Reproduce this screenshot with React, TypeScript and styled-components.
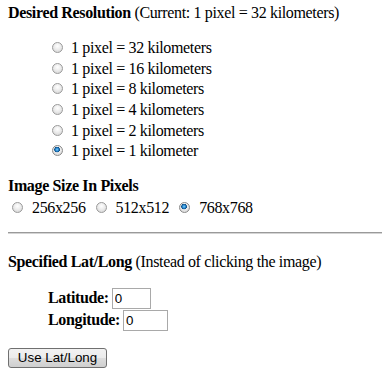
import React from 'react';
import styled, { createGlobalStyle } from 'styled-components';

const GlobalStyle = createGlobalStyle`
    html, body {
        margin: 0;
        padding: 0;
        background: #ffffff;
    }
    body {
        font-family: 'Liberation Serif', 'Times New Roman', serif;
        font-size: 16px;
        letter-spacing: -0.35px;
        color: #000000;
    }
`;

const resolutions = ['32 kilometers', '16 kilometers', '8 kilometers', '4 kilometers', '2 kilometers', '1 kilometer'];
const sizes = ['256x256', '512x512', '768x768'];

export default function App() {
    return (
        <Page>
            <GlobalStyle />
            <Heading>
                <strong>Desired Resolution</strong> (Current: 1 pixel = 32 kilometers)
            </Heading>
            <Indented>
                {resolutions.map((label, i) => (
                    <ListRow key={label}>
                        <Radio type="radio" name="resolution" defaultChecked={i === resolutions.length - 1} />
                        1 pixel = {label}
                    </ListRow>
                ))}
            </Indented>

            <Heading $top={15}>
                <strong>Image Size In Pixels</strong>
            </Heading>
            <SizeRow>
                {sizes.map((size, i) => (
                    <SizeOption key={size}>
                        <Radio type="radio" name="size" defaultChecked={i === sizes.length - 1} $gap={9} />
                        {size}
                    </SizeOption>
                ))}
            </SizeRow>

            <Rule />

            <Heading $top={19}>
                <strong>Specified Lat/Long</strong> (Instead of clicking the image)
            </Heading>
            <CoordBlock>
                <CoordRow>
                    <CoordLabel>Latitude:</CoordLabel>
                    <TextBox defaultValue="0" $width={39} />
                </CoordRow>
                <CoordRow>
                    <CoordLabel>Longitude:</CoordLabel>
                    <TextBox defaultValue="0" $width={45} />
                </CoordRow>
            </CoordBlock>
            <Button type="button">Use Lat/Long</Button>
        </Page>
    );
}

const Page = styled.div`
    padding: 4px 0 10px 8px;
    display: flex;
    flex-direction: column;
    align-items: flex-start;
`;

const Heading = styled.div<{ $top?: number }>`
    line-height: 18px;
    margin-top: ${({ $top }) => $top ?? 0}px;
    white-space: nowrap;
`;

const Indented = styled.div`
    margin: 16px 0 0 40px;
    display: flex;
    flex-direction: column;
`;

const ListRow = styled.label`
    display: flex;
    align-items: center;
    height: 20.7px;
    line-height: 20.7px;
    white-space: pre;
`;

const Radio = styled.input<{ $gap?: number }>`
    appearance: none;
    -webkit-appearance: none;
    box-sizing: border-box;
    width: 11px;
    height: 11px;
    margin: -2px ${({ $gap }) => $gap ?? 8}px 0 4px;
    border-radius: 50%;
    border: 1px solid #9a9a9a;
    background: radial-gradient(circle at 50% 35%, #ffffff 0%, #ececec 45%, #cfcfcf 100%);
    flex: none;

    &:checked {
        border-color: #8a8a8a;
        background:
            radial-gradient(circle at 45% 40%, #7fd0ff 0px, #2a8ad0 1.5px, #0d4d86 2.6px, transparent 3px),
            radial-gradient(circle at 50% 35%, #ffffff 0%, #ececec 45%, #cfcfcf 100%);
    }
`;

const SizeRow = styled.div`
    display: flex;
    align-items: center;
    height: 22px;
    margin-top: 2px;
`;

const SizeOption = styled.label`
    display: flex;
    align-items: center;
    margin-right: 6px;
    white-space: nowrap;
`;

const Rule = styled.hr`
    align-self: stretch;
    margin: 13px 0 0 0;
    height: 0;
    border: none;
    border-top: 1px solid #9a9a9a;
    border-bottom: 1px solid #d4d4d4;
`;

const CoordBlock = styled.div`
    margin: 17px 0 0 40px;
    display: flex;
    flex-direction: column;
    gap: 2px;
`;

const CoordRow = styled.div`
    display: flex;
    align-items: center;
    height: 20px;
`;

const CoordLabel = styled.b`
    margin-right: 3px;
`;

const TextBox = styled.input<{ $width: number }>`
    box-sizing: border-box;
    width: ${({ $width }) => $width}px;
    height: 21px;
    margin: 0;
    padding: 1px 2px;
    border: 1px solid #a9a9a9;
    font-family: 'Liberation Sans', Arial, sans-serif;
    font-size: 13.33px;
    letter-spacing: 0;
    color: #000000;
    outline: none;
`;

const Button = styled.button`
    box-sizing: border-box;
    margin-top: 18px;
    width: 99px;
    height: 20px;
    padding: 0;
    border: 1px solid #707070;
    border-radius: 3px;
    background: linear-gradient(#f2f2f2 0%, #ebebeb 50%, #dddddd 50%, #cfcfcf 100%);
    font-family: 'Liberation Sans', Arial, sans-serif;
    font-size: 13.33px;
    letter-spacing: 0;
    color: #000000;
    line-height: 18px;
`;
